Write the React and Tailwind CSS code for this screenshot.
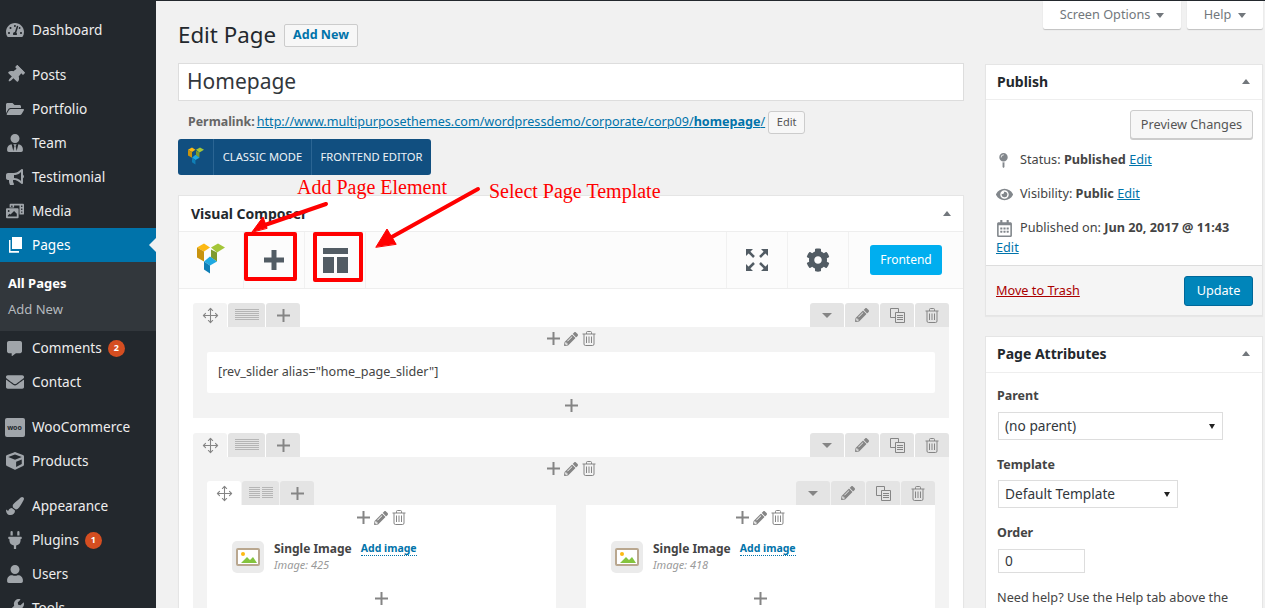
import { FaTachometerAlt, FaThumbtack, FaFolderOpen, FaUserTie, FaBullhorn, FaPhotoVideo, FaCommentAlt, FaEnvelope, FaCube, FaPaintBrush, FaPlug, FaUser, FaWrench, FaCog, FaPencilAlt, FaEye, FaMapPin, FaRegCalendarAlt } from 'react-icons/fa'
import { LuMove } from 'react-icons/lu'

const font = "font-['Noto_Sans','Open_Sans',sans-serif]"

function PagesIcon () {
  return (
    <svg width="20" height="20" viewBox="0 0 20 20" fill="#fff">
      <path d="M7 2h10v12H7z" />
      <path d="M4 5h1.500v11H14v1.800H4z" />
    </svg>
  )
}

function WooIcon () {
  return (
    <div className="relative flex h-[19px] w-[20px] items-center justify-center rounded-[2px] bg-[#a0a5aa]">
      <span className="text-[7px] font-bold leading-none text-[#23282d]">woo</span>
    </div>
  )
}

function SideItem ({ icon, label, badge, active }) {
  return (
    <div className={`relative flex h-[34px] items-center ${active ? 'bg-[#0073aa] text-white' : 'text-[#eeeeee]'}`}>
      <span className={`flex w-[32px] shrink-0 items-center justify-center pr-[3px] text-[18px] ${active ? 'text-white' : 'text-[#a0a5aa]'}`}>{icon}</span>
      <span className="text-[13.6px] leading-none">{label}</span>
      {badge && <span className="ml-[6px] flex h-[17px] w-[17px] items-center justify-center rounded-full bg-[#d54e21] text-[9px] font-bold text-white">{badge}</span>}
      {active && <span className="absolute right-0 top-[10px] h-0 w-0 border-y-[7px] border-r-[7px] border-y-transparent border-r-[#f1f1f1]" />}
    </div>
  )
}

function Sidebar () {
  return (
    <aside className="h-[608px] w-[156px] shrink-0 overflow-hidden bg-[#23282d] pt-[13px]">
      <SideItem icon={<FaTachometerAlt />} label="Dashboard" />
      <div className="h-[11px]" />
      <SideItem icon={<FaThumbtack className="rotate-45" />} label="Posts" />
      <SideItem icon={<FaFolderOpen />} label="Portfolio" />
      <SideItem icon={<FaUserTie />} label="Team" />
      <SideItem icon={<FaBullhorn />} label="Testimonial" />
      <SideItem icon={<FaPhotoVideo />} label="Media" />
      <SideItem icon={<PagesIcon />} label="Pages" active />
      <div className="h-[69px] bg-[#32373c] pt-[11px] pl-[8px] text-[13px]">
        <div className="h-[26px] leading-[20px] font-bold text-white">All Pages</div>
        <div className="leading-[20px] text-[#b4b9be]">Add New</div>
      </div>
      <SideItem icon={<FaCommentAlt className="text-[15px]" />} label="Comments" badge="2" />
      <SideItem icon={<FaEnvelope />} label="Contact" />
      <div className="h-[11px]" />
      <SideItem icon={<WooIcon />} label="WooCommerce" />
      <SideItem icon={<FaCube />} label="Products" />
      <div className="h-[11px]" />
      <SideItem icon={<FaPaintBrush />} label="Appearance" />
      <SideItem icon={<FaPlug />} label="Plugins" badge="1" />
      <SideItem icon={<FaUser />} label="Users" />
      <SideItem icon={<FaWrench />} label="Tools" />
    </aside>
  )
}

function VcLogo ({ width = 28, height = 31 }) {
  return (
    <svg width={width} height={height} viewBox="0 0 28 30">
      <path d="M0 4l7-4 6 4-6 4z" fill="#fdb913" />
      <path d="M0 4l7 4v10l-7-4z" fill="#c8930e" />
      <path d="M14 4l7-4 7 4-8 5z" fill="#a4c639" />
      <path d="M14 6l6 3v9l-6-4z" fill="#7f9a2d" />
      <path d="M7 18l6-5 7 5-7 4z" fill="#1fa9e1" />
      <path d="M7 18l6 4v8l-6-4z" fill="#0f7fb6" />
    </svg>
  )
}

function TemplateIcon () {
  return (
    <svg width="25" height="25" viewBox="0 0 25 25" fill="#525c64">
      <path d="M0 0h25v6H0zM0 9h11v16H0zM14 9h11v16H14z" />
    </svg>
  )
}

function ExpandIcon () {
  return (
    <svg width="22" height="22" viewBox="0 0 22 22" fill="#525c64" stroke="#525c64">
      <path d="M0 0h7L0 7zM22 0v7l-7-7zM0 22v-7l7 7zM22 22h-7l7-7z" strokeWidth="0" />
      <path d="M3 3l5 5M19 3l-5 5M3 19l5-5M19 19l-5-5" strokeWidth="2.500" />
    </svg>
  )
}

function LinesIcon ({ double }) {
  if (double) {
    return (
      <svg width="24" height="12" viewBox="0 0 24 12" stroke="#b5b5b5" strokeWidth="1">
        {[0.5, 2.5, 4.5, 6.5, 8.5, 10.5].map(y => <g key={y}><path d={`M0 ${y}h11`} /><path d={`M13 ${y}h11`} /></g>)}
      </svg>
    )
  }
  return (
    <svg width="24" height="12" viewBox="0 0 24 12" stroke="#b5b5b5" strokeWidth="1">
      {[0.5, 2.5, 4.5, 6.5, 8.5, 10.5].map(y => <path key={y} d={`M0 ${y}h24`} />)}
    </svg>
  )
}

function TrashIcon ({ size = 14 }) {
  return (
    <svg width={size} height={size + 1} viewBox="0 0 14 15" fill="none" stroke="#858585" strokeWidth="1">
      <path d="M0.500 3h13M4.500 3V1.500a1 1 0 0 1 1-1h3a1 1 0 0 1 1 1V3M2 3v10a1.500 1.500 0 0 0 1.500 1.500h7A1.500 1.500 0 0 0 12 13V3" />
      <path d="M4.500 5.500v6.500M7 5.500v6.500M9.500 5.500v6.500" />
    </svg>
  )
}

function CopyIcon () {
  return (
    <svg width="15" height="15" viewBox="0 0 15 15" fill="#e4e4e4" stroke="#858585" strokeWidth="1">
      <path d="M0.500 0.500h8v9h-8z" />
      <path d="M5.500 4.500h9v10h-9z" />
      <path d="M7 7.500h6M7 9.500h6M7 11.500h6" />
    </svg>
  )
}

function PlusIcon ({ size = 13, weight = 2, color = '#858585' }) {
  const mid = size / 2
  return (
    <svg width={size} height={size} viewBox={`0 0 ${size} ${size}`} stroke={color} strokeWidth={weight}>
      <path d={`M0 ${mid}H${size}M${mid} 0V${size}`} />
    </svg>
  )
}

function RowControls ({ double, white }) {
  return (
    <div className="flex h-[24px] items-stretch justify-between">
      <div className="flex gap-px">
        <div className={`flex w-[34px] items-center justify-center rounded-t-[3px] ${white ? 'bg-white' : 'bg-[#f3f3f3]'}`}><LuMove size={17} strokeWidth={1.5} className="text-[#858585]" /></div>
        <div className="flex w-[37px] items-center justify-center rounded-t-[3px] bg-[#e4e4e4]"><LinesIcon double={double} /></div>
        <div className="flex w-[34px] items-center justify-center rounded-t-[3px] bg-[#e4e4e4]"><PlusIcon /></div>
      </div>
      <div className="flex gap-px">
        <div className="flex w-[34px] items-center justify-center rounded-t-[3px] bg-[#e4e4e4]"><span className="h-0 w-0 border-x-[5px] border-t-[5px] border-x-transparent border-t-[#858585]" /></div>
        <div className="flex w-[34px] items-center justify-center rounded-t-[3px] bg-[#e4e4e4]"><FaPencilAlt size={14} className="text-[#858585]" /></div>
        <div className="flex w-[34px] items-center justify-center rounded-t-[3px] bg-[#e4e4e4]"><CopyIcon /></div>
        <div className="flex w-[34px] items-center justify-center rounded-t-[3px] bg-[#e4e4e4]"><TrashIcon /></div>
      </div>
    </div>
  )
}

function MiniActions () {
  return (
    <div className="flex items-center justify-center gap-[4px]">
      <PlusIcon />
      <FaPencilAlt size={14} className="text-[#858585]" />
      <TrashIcon />
    </div>
  )
}

function ImageColumn ({ id }) {
  return (
    <div className="h-[200px] flex-1 bg-white">
      <div className="pt-[5px]"><MiniActions /></div>
      <div className="mt-[16px] flex gap-[10px] pl-[25px]">
        <div className="flex h-[32px] w-[32px] items-center justify-center rounded-[5px] bg-[#ebebeb]">
          <svg width="24" height="18" viewBox="0 0 24 18">
            <rect x="1" y="1" width="22" height="16" rx="1" fill="#fff" stroke="#b9a78f" strokeWidth="2" />
            <circle cx="7" cy="6" r="2" fill="#fdb913" />
            <path d="M5 15l6-6 3 3 3-3 4 6z" fill="#84c43e" />
          </svg>
        </div>
        <div>
          <div className="flex h-[16px] items-center gap-[9px]">
            <span className="text-[12px] font-bold text-[#444]">Single Image</span>
            <span className="border-b border-dotted border-[#0073aa] text-[10.5px] font-bold leading-[13px] text-[#0073aa]">Add image</span>
          </div>
          <div className="mt-[1px] text-[11px] italic leading-[14px] text-[#9a9a9a]">Image: {id}</div>
        </div>
      </div>
      <div className="mt-[19px] flex justify-center"><PlusIcon /></div>
    </div>
  )
}

function VisualComposer () {
  return (
    <section className="relative mt-[20px] border border-[#e5e5e5] bg-white shadow-[0_1px_1px_rgba(0,0,0,0.04)]">
      <div className="flex h-[36px] items-center justify-between border-b border-[#eeeeee] px-[12px]">
        <h2 className="text-[14px] font-bold text-[#23282d]">Visual Composer</h2>
        <span className="h-0 w-0 border-x-[4px] border-b-[5px] border-x-transparent border-b-[#72777c]" />
      </div>
      <div className="flex h-[57px] items-stretch justify-between border-b border-[#eeeeee] bg-[#fcfcfc]">
        <div className="flex">
          <div className="flex w-[65px] items-center justify-center border-r border-[#f1f1f1] pb-[3px]"><VcLogo /></div>
          <div className="flex w-[61px] items-center justify-center border-r border-[#f1f1f1]"><PlusIcon size={20} weight={5} color="#525c64" /></div>
          <div className="flex w-[61px] items-center justify-center border-r border-[#f1f1f1]"><TemplateIcon /></div>
        </div>
        <div className="flex">
          <div className="flex w-[61px] items-center justify-center border-l border-[#f1f1f1]"><ExpandIcon /></div>
          <div className="flex w-[61px] items-center justify-center border-l border-[#f1f1f1]"><FaCog size={24} className="text-[#525c64]" /></div>
          <div className="flex w-[115px] items-center border-l border-[#f1f1f1] pl-[21px]">
            <button className="h-[30px] w-[72px] rounded-[3px] bg-[#00aeef] text-[12px] text-white">Frontend</button>
          </div>
        </div>
      </div>
      <div className="px-[14px] pt-[14px]">
        <RowControls />
        <div className="h-[91px] bg-[#f3f3f3] pt-[4px]">
          <MiniActions />
          <div className="mx-[14px] mt-[6px] flex h-[41px] items-center rounded-[2px] bg-white px-[11px] text-[12.6px] text-[#444]">[rev_slider alias="home_page_slider"]</div>
          <div className="mt-[6px] flex justify-center"><PlusIcon /></div>
        </div>
        <div className="mt-[15px]"><RowControls /></div>
        <div className="bg-[#f3f3f3] pt-[4px]">
          <MiniActions />
          <div className="mt-[5px] px-[14px]"><RowControls double white /></div>
          <div className="flex gap-[30px] px-[14px]">
            <ImageColumn id="425" />
            <ImageColumn id="418" />
          </div>
        </div>
      </div>
    </section>
  )
}

function Annotations () {
  return (
    <div className="pointer-events-none absolute inset-0">
      <div className="absolute left-[244px] top-[232px] h-[49px] w-[53px] rounded-[2px] border-4 border-[#ff0000]" />
      <div className="absolute left-[313px] top-[232px] h-[50px] w-[50px] rounded-[2px] border-4 border-[#ff0000]" />
      <div className="absolute left-[297px] top-[175px] font-['Liberation_Serif',serif] text-[20px] leading-[24px] text-[#ff0000]">Add Page Element</div>
      <div className="absolute left-[489px] top-[179px] font-['Liberation_Serif',serif] text-[20px] leading-[24px] text-[#ff0000]">Select Page Template</div>
      <svg className="absolute left-0 top-0" width="700" height="300" fill="#ff0000" stroke="#ff0000" strokeLinecap="round">
        <path d="M326 204L262 226" strokeWidth="4" />
        <path d="M252 232L263 217L267 228z" strokeWidth="1" />
        <path d="M478 189L390 238" strokeWidth="4" />
        <path d="M376 247L387 229L396 244z" strokeWidth="1" />
      </svg>
    </div>
  )
}

function Publish () {
  return (
    <section className="border border-[#e5e5e5] bg-white text-[12.7px] text-[#444] shadow-[0_1px_1px_rgba(0,0,0,0.04)]">
      <div className="flex h-[35px] items-center justify-between border-b border-[#eeeeee] px-[11px] pb-[2px]">
        <h2 className="text-[14px] font-bold text-[#23282d]">Publish</h2>
        <span className="mr-[1px] h-0 w-0 border-x-[4px] border-b-[5px] border-x-transparent border-b-[#72777c]" />
      </div>
      <div className="flex justify-end pl-[10px] pr-[9px] pt-[10px]">
        <button className="h-[29px] w-[123px] rounded-[3px] border border-[#cccccc] bg-[#f7f7f7] text-[12.7px] text-[#555] shadow-[0_1px_0_#cccccc]">Preview Changes</button>
      </div>
      <div className="mt-[9px] flex h-[24px] items-center pl-[10px]">
        <span className="flex w-[24px] text-[15px] text-[#82878c]"><FaMapPin /></span>
        <span>Status: <b>Published</b> <a className="text-[#0073aa] underline">Edit</a></span>
      </div>
      <div className="mt-[10px] flex h-[24px] items-center pl-[10px]">
        <span className="flex w-[24px] text-[17px] text-[#82878c]"><FaEye /></span>
        <span>Visibility: <b>Public</b> <a className="text-[#0073aa] underline">Edit</a></span>
      </div>
      <div className="mt-[10px] flex h-[24px] items-center pl-[10px]">
        <span className="flex w-[24px] text-[17px] text-[#82878c]"><FaRegCalendarAlt /></span>
        <span>Published on: <b>Jun 20, 2017 @ 11:43</b></span>
      </div>
      <div className="h-[25px] pl-[10px] leading-[14px]"><a className="text-[#0073aa] underline">Edit</a></div>
      <div className="flex h-[50px] items-center justify-between border-t border-[#dddddd] bg-[#f5f5f5] pl-[10px] pr-[9px]">
        <a className="text-[#a00] underline">Move to Trash</a>
        <button className="h-[30px] w-[69px] rounded-[3px] border border-[#006799] bg-[#0085ba] text-white">Update</button>
      </div>
    </section>
  )
}

function PageAttributes () {
  return (
    <section className="mt-[20px] h-[300px] border border-[#e5e5e5] bg-white text-[13px] text-[#444]">
      <div className="flex h-[36px] items-center justify-between border-b border-[#eeeeee] px-[11px] pb-[2px]">
        <h2 className="text-[14px] font-bold text-[#23282d]">Page Attributes</h2>
        <span className="mr-[1px] h-0 w-0 border-x-[4px] border-b-[5px] border-x-transparent border-b-[#72777c]" />
      </div>
      <div className="px-[11px]">
        <div className="mt-[14px] text-[12.5px] font-bold leading-[18px]">Parent</div>
        <div className="ml-[1px] mt-[7px] flex h-[28px] w-[225px] items-center justify-between border border-[#dddddd] px-[6px] text-[13.7px] text-[#32373c]">(no parent)<span className="mr-[1px] h-0 w-0 border-x-[3px] border-t-[5px] border-x-transparent border-t-[#222]" /></div>
        <div className="mt-[16px] text-[12.5px] font-bold leading-[18px]">Template</div>
        <div className="ml-[1px] mt-[6px] flex h-[28px] w-[180px] items-center justify-between border border-[#dddddd] px-[6px] text-[13.7px] text-[#32373c]">Default Template<span className="mr-[1px] h-0 w-0 border-x-[3px] border-t-[5px] border-x-transparent border-t-[#222]" /></div>
        <div className="mt-[16px] text-[12.5px] font-bold leading-[18px]">Order</div>
        <div className="ml-[1px] mt-[7px] flex h-[24px] w-[87px] items-center border border-[#dddddd] px-[6px] text-[13.7px] text-[#32373c]">0</div>
        <p className="mt-[15px] text-[12.7px] leading-[18px]">Need help? Use the Help tab above the screen title.</p>
      </div>
    </section>
  )
}

export default function App () {
  return (
    <div className={`relative flex h-[608px] overflow-hidden bg-[#f1f1f1] ${font}`}>
      <Sidebar />
      <main className="min-w-0 flex-1 border-t border-[#23282d]">
        <div className="flex justify-end pr-[2px]">
          <div className="flex h-[28px] w-[138px] items-center justify-center gap-[6px] rounded-b-[2px] bg-white text-[12.7px] text-[#72777c] shadow-[0_1px_1px_rgba(0,0,0,0.2)]">Screen Options<span className="h-0 w-0 border-x-[4px] border-t-[5px] border-x-transparent border-t-[#72777c]" /></div>
          <div className="ml-[6px] flex h-[28px] w-[76px] items-center justify-center gap-[7px] rounded-b-[2px] bg-white text-[12.7px] text-[#72777c] shadow-[0_1px_1px_rgba(0,0,0,0.2)]">Help<span className="h-0 w-0 border-x-[4px] border-t-[5px] border-x-transparent border-t-[#72777c]" /></div>
        </div>
        <div className="flex gap-[21px] pl-[22px] pr-[2px]">
          <div className="w-[786px] shrink-0">
            <div className="-mt-[6px] flex h-[24px] items-center gap-[8px]">
              <h1 className="text-[22.3px] leading-[24px] text-[#23282d]">Edit Page</h1>
              <button className="h-[23px] w-[74px] rounded-[2px] border border-[#cccccc] bg-[#f7f7f7] text-[12.5px] font-bold text-[#0073aa]">Add New</button>
            </div>
            <div className="mt-[16px] flex h-[38px] items-center border border-[#dddddd] bg-white px-[8px] text-[21px] text-[#32373c]">Homepage</div>
            <div className="mt-[10px] flex h-[23px] items-center pl-[10px] text-[12.4px] text-[#666]">
              <b>Permalink:</b>
              <a className="ml-[2px] text-[12.6px] text-[#0073aa] underline">http://www.multipurposethemes.com/wordpressdemo/corporate/corp09/<b>homepage</b>/</a>
              <button className="ml-[3px] h-[23px] w-[37px] rounded-[3px] border border-[#cccccc] bg-[#f7f7f7] text-[11px] text-[#555]">Edit</button>
            </div>
            <div className="mt-[5px] flex h-[36px] w-[253px] items-stretch rounded-[3px] bg-[#114f80] text-[11.2px] text-[#eef3f7]">
              <div className="flex w-[36px] items-center justify-center border-r border-[#2b6593] pb-[3px]"><VcLogo width={16} height={18} /></div>
              <div className="flex w-[98px] items-center justify-center border-r border-[#2b6593]">CLASSIC MODE</div>
              <div className="flex flex-1 items-center justify-center">FRONTEND EDITOR</div>
            </div>
            <VisualComposer />
          </div>
          <div className="mt-[35px] w-[278px] shrink-0">
            <Publish />
            <PageAttributes />
          </div>
        </div>
      </main>
      <Annotations />
    </div>
  )
}
